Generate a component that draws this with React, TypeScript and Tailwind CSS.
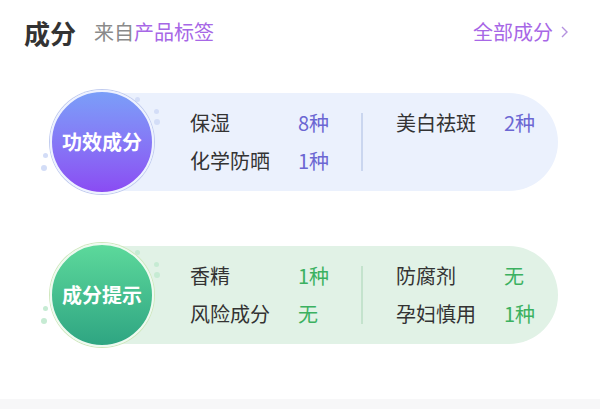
import React from "react";

type Item = { label: string; value: string };

function Dot({ x, y, s, c }: { x: number; y: number; s: number; c: string }) {
  return (
    <span
      className="absolute rounded-full"
      style={{ left: x - s / 2, top: y - s / 2, width: s, height: s, background: c }}
    />
  );
}

function Card({
  title,
  circleClass,
  pillClass,
  dotColor,
  valueClass,
  dividerClass,
  left,
  right,
}: {
  title: string;
  circleClass: string;
  pillClass: string;
  dotColor: string;
  valueClass: string;
  dividerClass: string;
  left: Item[];
  right: Item[];
}) {
  const col = (items: Item[], last: boolean) => (
    <div className="flex shrink-0 flex-col">
      {items.map((it) => (
        <div key={it.label} className="flex h-[38px] items-center">
          <span className="w-[108px] shrink-0 text-[#333333]">{it.label}</span>
          <span className={(last ? "" : "w-[63px] ") + "shrink-0 " + valueClass}>{it.value}</span>
        </div>
      ))}
      {items.length < 2 && <div className="h-[38px]" />}
    </div>
  );
  return (
    <div className="relative flex h-[104px] items-center">
      <div
        className={
          "relative z-10 flex h-[104px] w-[104px] shrink-0 items-center justify-center rounded-full text-[20px] font-bold text-white " +
          circleClass
        }
      >
        {title}
      </div>
      <div className={"ml-[-34px] flex h-[98px] w-[438px] shrink-0 items-center rounded-r-full pl-[70px] text-[20px] " + pillClass}>
        {col(left, false)}
        <div className={"mr-[33px] h-[58px] w-[2px] shrink-0 " + dividerClass} />
        {col(right, true)}
      </div>
      <Dot x={87} y={9} s={5} c={dotColor} />
      <Dot x={106} y={21} s={5} c={dotColor} />
      <Dot x={107} y={32} s={6} c={dotColor} />
      <Dot x={-5} y={65} s={5} c={dotColor} />
      <Dot x={-6} y={78} s={6} c={dotColor} />
    </div>
  );
}

export default function App() {
  return (
    <div
      className="flex h-[409px] w-full flex-col bg-white"
      style={{ fontFamily: '"Noto Sans CJK SC", "Noto Sans", sans-serif' }}
    >
      <div className="flex h-[64px] items-center justify-between pl-[24px] pr-[30px]">
        <div className="flex items-center">
          <span className="text-[26px] font-bold text-[#333333]">成分</span>
          <span className="ml-[18px] text-[20px] text-[#8a8a8a]">
            来自<span className="text-[#a767e6]">产品标签</span>
          </span>
        </div>
        <div className="flex items-center text-[20px] text-[#a767e6]">
          <span>全部成分</span>
          <svg width="10" height="14" viewBox="0 0 10 14" className="ml-[7px]">
            <path d="M2 2 L7 7 L2 12" fill="none" stroke="#b491df" strokeWidth="1.4" />
          </svg>
        </div>
      </div>
      <div className="flex flex-1 flex-col gap-[49px] pl-[50px] pt-[26px]">
        <Card
          title="功效成分"
          circleClass="bg-gradient-to-b from-[#7a9ef8] to-[#8a4bf3] border-2 border-[#eef2ff] shadow-[0_0_0_1px_#c0cbef]"
          pillClass="bg-[#ebf1fd]"
          dotColor="#d3ddf7"
          valueClass="text-[#6b67d3]"
          dividerClass="bg-[#cad6ef]"
          left={[
            { label: "保湿", value: "8种" },
            { label: "化学防晒", value: "1种" },
          ]}
          right={[{ label: "美白祛斑", value: "2种" }]}
        />
        <Card
          title="成分提示"
          circleClass="bg-gradient-to-b from-[#5cd99b] to-[#2ea582] border-2 border-[#eefaf0] shadow-[0_0_0_1px_#cfe7bd]"
          pillClass="bg-[#e1f2e6]"
          dotColor="#c6ebd3"
          valueClass="text-[#3bb160]"
          dividerClass="bg-[#c4e3cd]"
          left={[
            { label: "香精", value: "1种" },
            { label: "风险成分", value: "无" },
          ]}
          right={[
            { label: "防腐剂", value: "无" },
            { label: "孕妇慎用", value: "1种" },
          ]}
        />
      </div>
      <div className="h-[10px] w-full bg-[#f7f7f8]" />
    </div>
  );
}
